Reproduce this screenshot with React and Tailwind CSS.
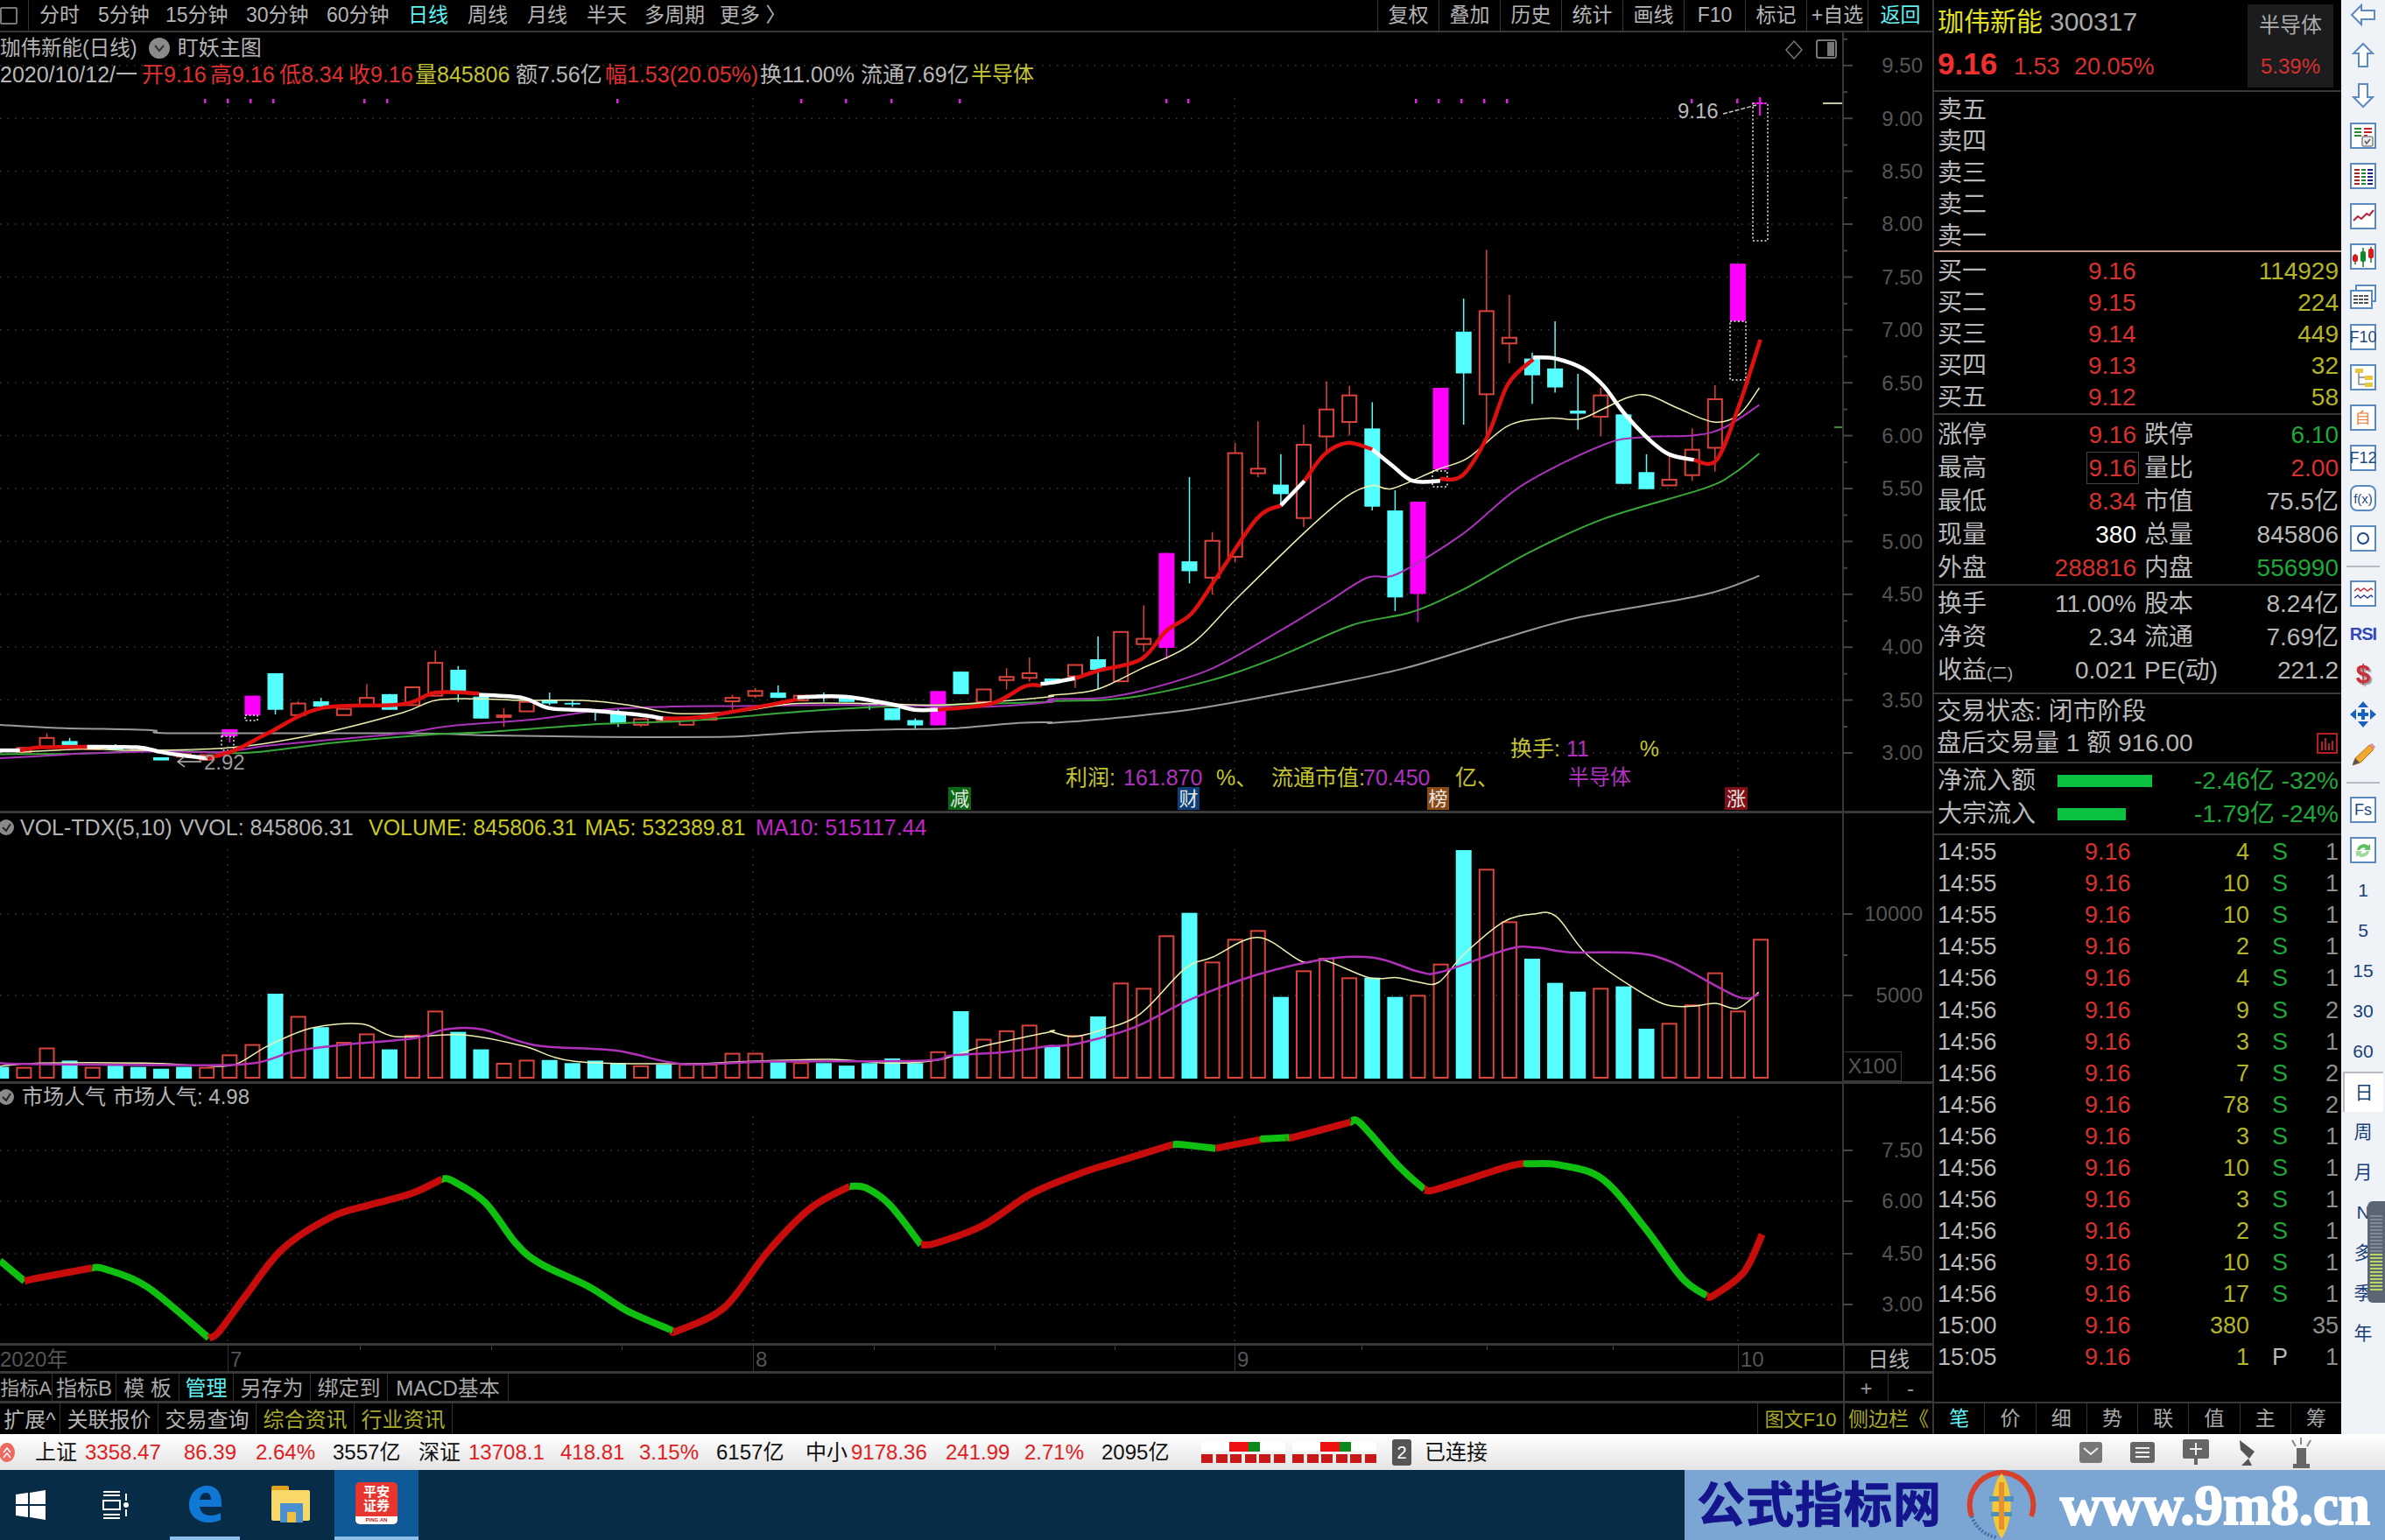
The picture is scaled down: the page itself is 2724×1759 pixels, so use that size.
import React from "react";

// measured from crops of the reference, converted to page pixels
const leftPt = ([x, y]) => [x / 1.307, 700 + y / 2.8];
const rightPt = ([x, y]) => [1200 + x / 1.742, 250 + y / 2.306];
const volRightPt = ([x, y]) => [1200 + x / 1.568, 920 + y / 3];
const popPt = ([x, y]) => [x / 0.713, 1230 + y / 3];
const candleX = (i) => 1.3 + 26.1 * i;

// catmull-rom through the measured points so the averages don't look like straight segments
const smooth = (p) => {
  if (p.length < 3) return `M${p.map((q) => q.join(" ")).join("L")}`;
  let d = `M${p[0][0].toFixed(1)} ${p[0][1].toFixed(1)}`;
  for (let i = 0; i < p.length - 1; i++) {
    const a = p[i - 1] || p[i];
    const b = p[i];
    const c = p[i + 1];
    const e = p[i + 2] || c;
    const c1 = [b[0] + (c[0] - a[0]) / 6, b[1] + (c[1] - a[1]) / 6];
    const c2 = [c[0] - (e[0] - b[0]) / 6, c[1] - (e[1] - b[1]) / 6];
    d += `C${c1[0].toFixed(1)} ${c1[1].toFixed(1)} ${c2[0].toFixed(1)} ${c2[1].toFixed(1)} ${c[0].toFixed(1)} ${c[1].toFixed(1)}`;
  }
  return d;
};

const candlesLeft = [
  ["c", 438, 445, 435, 448], ["r", 432, 445], ["r", 400, 428, 385, 428], ["c", 410, 425, 400, 425], ["r", 428, 436],
  ["c", 428, 438, 420, 438], ["r", 430, 440], ["c", 462, 472], ["r", 452, 460], ["r", 455, 470],
  ["m", 372, 395, 372, 415], ["m", 265, 328], ["c", 193, 310, 193, 325], ["r", 290, 327, 283, 327], ["c", 283, 300, 272, 300],
  ["r", 307, 327], ["r", 272, 295, 228, 295], ["c", 260, 310], ["r", 238, 295], ["r", 160, 265, 120, 265],
  ["c", 182, 250, 170, 285], ["c", 268, 338], ["r", 328, 333, 305, 365], ["r", 285, 315], ["c", 280, 290, 255, 295],
  ["c", 288, 293, 280, 300], ["c", 312, 318, 310, 345], ["c", 320, 355, 305, 365], ["r", 340, 358, 340, 365], ["r", 335, 345],
  ["r", 340, 358], ["r", 335, 342], ["r", 272, 283, 262, 310], ["r", 250, 265, 240, 272], ["c", 255, 272, 232, 272],
  ["r", 265, 280], ["c", 262, 266, 255, 285], ["c", 272, 285], ["c", 290, 295, 290, 310], ["c", 305, 343],
  ["c", 343, 360, 337, 375], ["m", 250, 360], ["c", 188, 260], ["r", 245, 285], ["r", 205, 215, 177, 245],
  ["r", 193, 208, 143, 220], ["c", 210, 225],
];
const candlesRight = [
  ["r", 1175, 1205, 1175, 1235], ["c", 1160, 1188, 1100, 1240], ["r", 1088, 1218], ["r", 1106, 1120, 1018, 1140], ["m", 880, 1130, 880, 1160],
  ["c", 902, 928, 680, 960], ["r", 848, 945, 825, 990], ["r", 617, 890, 590, 905], ["r", 658, 670, 533, 680], ["c", 700, 725, 620, 750],
  ["r", 595, 788, 542, 812], ["r", 502, 573, 428, 620], ["r", 465, 535, 440, 570], ["c", 552, 758, 483, 768], ["c", 768, 997, 715, 1033],
  ["m", 745, 988, 745, 1062], ["m", 445, 660], ["c", 297, 407, 210, 542], ["r", 243, 462, 82, 590], ["r", 313, 328, 200, 380],
  ["c", 368, 412, 352, 487], ["c", 394, 444, 270, 458], ["c", 505, 513, 408, 555], ["r", 465, 521, 445, 573], ["c", 515, 698],
  ["c", 667, 712, 620, 712], ["r", 687, 702, 625, 702], ["r", 608, 675, 552, 690], ["r", 475, 603, 438, 665], ["m", 118, 269],
];
const candles = [
  ...candlesLeft.map(([t, a, b, c = a, d = b]) => [t, 700 + a / 2.8, 700 + b / 2.8, 700 + c / 2.8, 700 + d / 2.8]),
  ...candlesRight.map(([t, a, b, c = a, d = b]) => [t, 250 + a / 2.306, 250 + b / 2.306, 250 + c / 2.306, 250 + d / 2.306]),
];

const thickLine = [
  ["#ffffff", [[0, 440], [30, 440]], []],
  ["#e01010", [[30, 440], [60, 430], [130, 428]], []],
  ["#ffffff", [[130, 428], [205, 430], [240, 445], [270, 455], [310, 465]], []],
  ["#e01010", [[310, 465], [350, 440], [400, 385], [480, 305], [600, 293], [650, 255], [715, 258]], []],
  ["#ffffff", [[715, 262], [780, 272], [820, 305], [880, 312], [950, 325], [990, 338]], []],
  ["#e01010", [[990, 338], [1040, 335], [1110, 310], [1190, 277]], []],
  ["#ffffff", [[1190, 270], [1260, 268], [1330, 292], [1365, 310], [1400, 310]], []],
  ["#e01010", [[1400, 310], [1480, 290], [1530, 235], [1555, 233]], []],
  ["#ffffff", [], [[-20, 1225], [0, 1222], [48, 1210]]],
  ["#e01010", [], [[50, 1210], [95, 1190], [180, 1160], [230, 1085], [280, 1040], [330, 945], [410, 790], [458, 755]]],
  ["#ffffff", [], [[458, 755], [505, 690]]],
  ["#e01010", [], [[505, 690], [545, 620], [590, 590], [640, 607]]],
  ["#ffffff", [], [[640, 607], [680, 650], [720, 690], [775, 690]]],
  ["#e01010", [], [[775, 685], [820, 675], [870, 570], [910, 435], [960, 370]]],
  ["#ffffff", [], [[960, 365], [1005, 368], [1060, 395], [1100, 440], [1140, 510], [1190, 580], [1230, 620], [1280, 635]]],
  ["#e01010", [], [[1280, 635], [1325, 635], [1370, 490], [1412, 318]]],
];

const maLines = [
  ["#9a9a9a", 2, [[0, 358], [85, 368], [225, 375], [260, 385], [600, 385], [735, 392], [900, 397], [1075, 397], [1140, 390], [1215, 380], [1350, 372], [1420, 370], [1520, 352], [1568, 350]],
    [[0, 1328], [100, 1318], [290, 1290], [500, 1240], [700, 1185], [900, 1105], [1050, 1050], [1300, 990], [1410, 940]]],
  ["#38a838", 2, [[0, 452], [120, 450], [250, 440], [365, 448], [500, 415], [640, 390], [735, 380], [900, 355], [1030, 345], [1200, 315], [1320, 300], [1400, 295], [1480, 290], [1568, 285]],
    [[0, 1270], [150, 1262], [320, 1215], [450, 1155], [600, 1070], [720, 1035], [830, 970], [950, 880], [1100, 790], [1300, 710], [1360, 670], [1410, 618]]],
  ["#a832b8", 2, [[0, 465], [85, 455], [120, 450], [240, 443], [330, 445], [400, 425], [500, 405], [600, 385], [680, 360], [800, 340], [900, 310], [1000, 300], [1100, 298], [1200, 295], [1320, 295], [1400, 300], [1480, 300], [1568, 285]],
    [[0, 1265], [100, 1262], [190, 1240], [320, 1185], [450, 1090], [550, 1010], [630, 945], [690, 935], [820, 830], [940, 700], [1100, 595], [1180, 575], [1280, 570], [1340, 550], [1410, 490]]],
  ["#f0f0b0", 1.5, [[30, 445], [130, 435], [205, 440], [350, 430], [480, 385], [600, 320], [650, 280], [715, 275], [780, 280], [870, 280], [940, 295], [1010, 322], [1100, 315], [1190, 290], [1300, 290], [1400, 295], [1480, 285], [1568, 268]],
    [[0, 1255], [90, 1240], [180, 1185], [280, 1120], [370, 1000], [510, 820], [590, 730], [640, 702], [680, 710], [770, 660], [830, 630], [910, 545], [990, 525], [1050, 528], [1100, 500], [1150, 470], [1190, 465], [1250, 500], [1320, 535], [1370, 515], [1410, 445]]],
];

const topMarks = [234, 260, 286, 312, 416, 442, 705, 915, 966, 1018, 1096, 1332, 1357, 1617, 1643, 1669, 1695, 1721, 1932, 1984, 2010];

const volLeft = [1452, 1455, 1393, 1432, 1455, 1448, 1452, 1458, 1452, 1455, 1415, 1382, 1218, 1292, 1325, 1375, 1348, 1396, 1352, 1275, 1340, 1396, 1442, 1432, 1430, 1440, 1432, 1440, 1450, 1445, 1445, 1445, 1410, 1410, 1432, 1440, 1440, 1448, 1440, 1425, 1440, 1405, 1274, 1365, 1338, 1320];
const volRight = [825, 790, 723, 610, 628, 448, 368, 538, 460, 430, 656, 568, 525, 592, 590, 656, 652, 545, 153, 220, 400, 525, 608, 638, 628, 620, 765, 748, 685, 575, 706, 460];
const volTops = [...volLeft.map((y) => 700 + y / 2.8), ...volRight.map((y) => 920 + y / 3)];
const volCyan = new Set([0, 3, 5, 6, 7, 8, 12, 14, 17, 20, 21, 24, 25, 26, 27, 29, 34, 36, 37, 38, 39, 40, 42, 46, 48, 52, 56, 60, 61, 64, 67, 68, 69, 71, 72]);

const volYellow = [...[[0, 1450], [60, 1440], [215, 1440], [300, 1448], [350, 1445], [400, 1385], [465, 1328], [540, 1315], [590, 1355], [690, 1350], [780, 1385], [860, 1435], [1030, 1442], [1110, 1435], [1240, 1428], [1330, 1440], [1400, 1430], [1470, 1385], [1568, 1340]].map(leftPt),
  ...[[0, 775], [40, 792], [90, 770], [160, 715], [240, 560], [290, 520], [372, 452], [450, 535], [490, 530], [570, 590], [620, 590], [660, 606], [695, 606], [740, 510], [810, 400], [865, 372], [905, 380], [960, 510], [1040, 620], [1100, 682], [1150, 688], [1190, 678], [1230, 695], [1268, 640]].map(volRightPt)];
const volPurple = [...[[0, 1440], [50, 1443], [290, 1447], [380, 1440], [440, 1402], [510, 1382], [620, 1360], [665, 1332], [720, 1332], [800, 1383], [920, 1400], [1020, 1443], [1150, 1435], [1380, 1432], [1420, 1415], [1500, 1405], [1568, 1385]].map(leftPt),
  ...[[0, 825], [50, 815], [150, 760], [250, 665], [370, 580], [490, 527], [580, 522], [660, 570], [700, 570], [820, 492], [870, 487], [930, 503], [1040, 505], [1110, 535], [1230, 655], [1268, 647]].map(volRightPt)];

const popSegments = [
  ["g", [[0, 630], [20, 700]]],
  ["r", [[30, 690], [75, 655]]],
  ["g", [[85, 658], [120, 720], [170, 895]]],
  ["r", [[178, 875], [200, 750], [230, 590], [270, 480], [300, 440], [335, 400], [360, 350]]],
  ["g", [[368, 355], [395, 430], [420, 570], [440, 640], [480, 720], [510, 800], [548, 870]]],
  ["r", [[552, 870], [590, 790], [625, 600], [660, 450], [692, 375]]],
  ["g", [[705, 380], [725, 440], [750, 575]]],
  ["r", [[762, 570], [800, 510], [840, 400], [880, 330], [910, 290], [955, 232]]],
  ["g", [[962, 232], [990, 245]]],
  ["r", [[998, 238], [1030, 212]]],
  ["g", [[1030, 212], [1050, 208]]],
  ["r", [[1055, 205], [1100, 155]]],
  ["g", [[1108, 160], [1140, 310], [1160, 385]]],
  ["r", [[1170, 385], [1230, 305], [1245, 298]]],
  ["g", [[1245, 298], [1270, 302], [1305, 350], [1340, 520], [1370, 690], [1390, 750]]],
  ["r", [[1395, 750], [1420, 670], [1435, 540]]],
];

const gridProps = { stroke: "#3c3c3c", strokeWidth: 1.5, strokeDasharray: "1.5 7" };

function MainChart() {
  const hLines = Array.from({ length: 14 }, (_, i) => 860 - i * 60.4);
  return (
    <svg width="2207" height="889" viewBox="0 37 2207 889" className="block">
      {hLines.map((y) => <line key={y} x1="0" x2="2100" y1={y} y2={y} {...gridProps} />)}
      {[260, 860, 1410, 1985].map((x) => <line key={x} x1={x} x2={x} y1="112" y2="926" {...gridProps} />)}
      <line x1="2105" x2="2105" y1="37" y2="926" stroke="#383838" strokeWidth="2" />
      {hLines.map((y) => <line key={y} x1="2105" x2="2116" y1={y} y2={y} stroke="#444" strokeWidth="2" />)}
      {hLines.map((y) => <line key={y} x1="2105" x2="2110" y1={y - 30} y2={y - 30} stroke="#444" strokeWidth="2" />)}
      <line x1="2082" x2="2104" y1="118" y2="118" stroke="#c8c8a0" strokeWidth="2" />
      <line x1="2095" x2="2104" y1="488" y2="488" stroke="#3a8a3a" strokeWidth="2" />
      {topMarks.map((x) => <rect key={x} x={x - 1} y="113" width="2.5" height="5" fill="#e020e0" />)}

      {candles.map(([t, top, bottom, wickTop, wickBottom], i) => {
        const x = candleX(i);
        const color = t === "r" ? "#d9433c" : t === "c" ? "#55ffff" : "#ff00ff";
        return (
          <g key={i}>
            <line x1={x} x2={x} y1={wickTop} y2={wickBottom} stroke={color} strokeWidth="1.5" />
            {t === "r" ? (
              <rect x={x - 8} y={top} width="16" height={bottom - top} fill="#000" stroke={color} strokeWidth="2" />
            ) : (
              <rect x={x - 9} y={top} width="18" height={bottom - top} fill={color} />
            )}
          </g>
        );
      })}

      {/* limit-up gap boxes */}
      <g fill="none" stroke="#e8e8e8" strokeWidth="1.5" strokeDasharray="2 2.5">
        <rect x="2002" y="118" width="17" height="157" />
        <rect x="1976" y="367" width="18" height="67" />
        <rect x="1636" y="538" width="17" height="18" />
        <rect x="280" y="817" width="14" height="6" />
        <rect x="253" y="841" width="14" height="16" />
      </g>
      <line x1="2010" x2="2010" y1="111" y2="132" stroke="#ff00ff" strokeWidth="2" />
      <line x1="2003" x2="2018" y1="118" y2="118" stroke="#ff00ff" strokeWidth="1.5" />
      <line x1="1968" x2="2006" y1="130" y2="120" stroke="#ccc" strokeWidth="1.5" strokeDasharray="5 2" />

      {maLines.map(([color, w, left, right]) => (
        <path key={color} d={smooth([...left.map(leftPt), ...right.map(rightPt)])} fill="none" stroke={color} strokeWidth={w} />
      ))}
      {thickLine.map(([color, left, right], i) => (
        <path key={i} d={smooth([...left.map(leftPt), ...right.map(rightPt)])} fill="none" stroke={color} strokeWidth="4.5" />
      ))}

      {/* small diamond + panel toggle */}
      <polygon points="2049,47 2058,57 2049,67 2040,57" fill="none" stroke="#777" strokeWidth="1.5" />
      <rect x="2075" y="46" width="22" height="20" rx="2" fill="none" stroke="#777" strokeWidth="2" />
      <rect x="2087" y="48" width="8" height="16" fill="#777" />
      <line x1="203" x2="230" y1="870" y2="870" stroke="#bbb" strokeWidth="1.5" />
      <polyline points="211,864 203,870 211,876" fill="none" stroke="#bbb" strokeWidth="1.5" />
    </svg>
  );
}

function VolChart() {
  return (
    <svg width="2207" height="306" viewBox="0 929 2207 306" className="block">
      {[1044, 1137].map((y) => <line key={y} x1="0" x2="2100" y1={y} y2={y} {...gridProps} />)}
      {[260, 860, 1410, 1985].map((x) => <line key={x} x1={x} x2={x} y1="970" y2="1230" {...gridProps} />)}
      <line x1="2105" x2="2105" y1="929" y2="1235" stroke="#383838" strokeWidth="2" />
      {[1044, 1137].map((y) => <line key={y} x1="2105" x2="2116" y1={y} y2={y} stroke="#444" strokeWidth="2" />)}
      <line x1="2105" x2="2110" y1="1091" y2="1091" stroke="#444" strokeWidth="2" />
      {volTops.map((top, i) => {
        const x = candleX(i);
        return volCyan.has(i) ? (
          <rect key={i} x={x - 9} y={top} width="18" height={1232 - top} fill="#55ffff" />
        ) : (
          <rect key={i} x={x - 8} y={top} width="16" height={1231 - top} fill="#000" stroke="#d9433c" strokeWidth="2" />
        );
      })}
      <path d={smooth(volYellow)} fill="none" stroke="#f0f0b0" strokeWidth="1.5" />
      <path d={smooth(volPurple)} fill="none" stroke="#b030b8" strokeWidth="2.5" />
    </svg>
  );
}

function PopChart() {
  return (
    <svg width="2207" height="296" viewBox="0 1238 2207 296" className="block">
      {[1314, 1372, 1432, 1490].map((y) => <line key={y} x1="0" x2="2100" y1={y} y2={y} {...gridProps} />)}
      {[260, 860, 1410, 1985].map((x) => <line key={x} x1={x} x2={x} y1="1275" y2="1534" {...gridProps} />)}
      <line x1="2105" x2="2105" y1="1238" y2="1534" stroke="#383838" strokeWidth="2" />
      {[1314, 1372, 1432, 1490].map((y) => <line key={y} x1="2105" x2="2116" y1={y} y2={y} stroke="#444" strokeWidth="2" />)}
      {popSegments.map(([c, list], i) => {
        // start where the previous colour stopped, there is no gap in the curve
        const prev = i > 0 ? popSegments[i - 1][1] : null;
        const p = (prev ? [prev[prev.length - 1], ...list] : list).map(popPt);
        return <path key={i} d={smooth(p)} fill="none" stroke={c === "r" ? "#c80c0c" : "#10c010"} strokeWidth="8" />;
      })}
    </svg>
  );
}

const CheckDot = () => (
  <svg width="16" height="20" viewBox="0 0 16 20" className="shrink-0">
    <circle cx="7" cy="10" r="9" fill="#8a8a8a" />
    <polyline points="3,10 7,14 12,6" fill="none" stroke="#222" strokeWidth="2" />
  </svg>
);

const periodTabs = [
  ["分时", "w-[67px]", false], ["5分钟", "w-[77px]", false], ["15分钟", "w-[92px]", false], ["30分钟", "w-[92px]", false],
  ["60分钟", "w-[93px]", false], ["日线", "w-[68px]", true], ["周线", "w-[68px]", false], ["月线", "w-[68px]", false],
  ["半天", "w-[66px]", false], ["多周期", "w-[86px]", false], ["更多 〉", "w-[90px]", false],
];
const actionTabs = ["复权", "叠加", "历史", "统计", "画线", "F10", "标记", "+自选"];

function TopBar() {
  return (
    <div className="flex h-[37px] shrink-0 items-stretch border-b-2 border-[#383838] text-[23px] leading-[35px] text-[#b4b4b4]">
      <div className="flex w-[33px] shrink-0 items-center border-r border-[#333]">
        <div className="h-[20px] w-[20px] rounded-[2px] border-2 border-[#777]" />
      </div>
      <div className="ml-[12px] flex">
        {periodTabs.map(([label, w, active]) => (
          <span key={label} className={`${w} whitespace-nowrap ${active ? "text-[#5ff2f2]" : ""}`}>{label}</span>
        ))}
      </div>
      <div className="ml-auto flex">
        {actionTabs.map((label) => (
          <span key={label} className="w-[70px] whitespace-nowrap border-l border-[#383838] text-center">{label}</span>
        ))}
        <span className="w-[74px] border-l border-[#383838] text-center text-[#5ff2f2]">返回</span>
      </div>
    </div>
  );
}

const quoteParts = [
  ["2020/10/12/一", "w-[162px] text-[#b8b8b8]"], ["开9.16", "w-[78px] text-[#e03030]"], ["高9.16", "w-[79px] text-[#e03030]"], ["低8.34", "w-[79px] text-[#e03030]"],
  ["收9.16", "w-[76px] text-[#e03030]"], ["量845806", "w-[115px] text-[#c4c430]"], ["额7.56亿", "w-[102px] text-[#b8b8b8]"], ["幅1.53(20.05%)", "w-[177px] text-[#e03030]"],
  ["换11.00%", "w-[115px] text-[#b8b8b8]"], ["流通7.69亿", "w-[126px] text-[#b8b8b8]"], ["半导体", "text-[#c4c430] text-[24px]"],
];
const priceLabels = ["9.50", "9.00", "8.50", "8.00", "7.50", "7.00", "6.50", "6.00", "5.50", "5.00", "4.50", "4.00", "3.50", "3.00"];

function MainPane() {
  return (
    <div className="relative h-[892px] shrink-0 border-b-[3px] border-[#383838]">
      <MainChart />
      <div className="absolute left-0 top-[3px] leading-[30px]">
        <div className="flex items-center text-[#b4b4b4]">
          <span className="text-[23.5px]">珈伟新能(日线)</span>
          <span className="ml-[13px] flex h-[24px] w-[24px] items-center justify-center rounded-full bg-[#8a8a8a]">
            <svg width="12" height="10" viewBox="0 0 12 10"><path d="M1 2l5 6 5-6" fill="none" stroke="#333" strokeWidth="2" /></svg>
          </span>
          <span className="ml-[9px] text-[24px]">盯妖主图</span>
        </div>
        <div className="flex whitespace-nowrap text-[25px]">
          {quoteParts.map(([text, cls]) => <span key={text} className={cls}>{text}</span>)}
        </div>
      </div>
      <div className="absolute left-[1916px] top-[76px] text-[24px] leading-[28px] text-[#b8b8b8]">9.16</div>
      <div className="absolute left-[233px] top-[820px] text-[24px] leading-[28px] text-[#999]">2.92</div>

      {/* axis labels */}
      <div className="absolute right-[11px] top-[8px] flex flex-col text-[24px] text-[#555]">
        {priceLabels.map((p) => <div key={p} className="flex h-[60.4px] items-center">{p}</div>)}
      </div>

      {/* notes on the chart canvas */}
      <div className="absolute left-[1725px] top-[804px] whitespace-nowrap text-[25px] leading-[28px] text-[#c4c430]">
        换手: <span className="text-[#b030c0]">11</span><span className="ml-[58px]">%</span>
      </div>
      <div className="absolute left-[1217px] top-[837px] flex whitespace-nowrap text-[25px] leading-[28px] text-[#c4c430]">
        <span className="w-[66px]">利润:</span>
        <span className="w-[106px] text-[#b030c0]">161.870</span>
        <span className="w-[63px]">%、</span>
        <span className="w-[105px] overflow-visible">流通市值:</span>
        <span className="w-[105px] text-[#b030c0]">70.450</span>
        <span className="w-[129px]">亿、</span>
        <span className="text-[24px] text-[#b030c0]">半导体</span>
      </div>
      <div className="absolute left-[1083px] top-[862px] flex h-[26px] w-[26px] items-center justify-center bg-[#0a6a12] text-[22px] text-[#e8e8e8]">减</div>
      <div className="absolute left-[1345px] top-[862px] flex h-[26px] w-[25px] items-center justify-center bg-[#0c3f78] text-[22px] text-[#e8e8e8]">财</div>
      <div className="absolute left-[1630px] top-[862px] flex h-[26px] w-[25px] items-center justify-center bg-[#8a4a14] text-[22px] text-[#e8e8e8]">榜</div>
      <div className="absolute left-[1970px] top-[862px] flex h-[26px] w-[26px] items-center justify-center bg-[#7e0f14] text-[22px] text-[#e8e8e8]">涨</div>
    </div>
  );
}

function VolPane() {
  return (
    <div className="relative h-[309px] shrink-0 border-b-[3px] border-[#383838]">
      <VolChart />
      <div className="absolute left-0 top-[2px] flex items-center whitespace-nowrap text-[25px] leading-[28px]">
        <CheckDot />
        <span className="ml-[7px] w-[182px] text-[#b4b4b4]">VOL-TDX(5,10)</span>
        <span className="w-[216px] text-[#b4b4b4]">VVOL: 845806.31</span>
        <span className="w-[247px] text-[#c8c820]">VOLUME: 845806.31</span>
        <span className="w-[195px] text-[#c8c820]">MA5: 532389.81</span>
        <span className="text-[#c026c8]">MA10: 515117.44</span>
      </div>
      <div className="absolute right-[11px] top-[101px] text-[24px] leading-[28px] text-[#555]">10000</div>
      <div className="absolute right-[11px] top-[194px] text-[24px] leading-[28px] text-[#555]">5000</div>
      <div className="absolute bottom-0 left-[2105px] flex h-[34px] w-[67px] items-center justify-center border border-[#3a3a3a] bg-black text-[24px] text-[#555]">X100</div>
    </div>
  );
}

function PopPane() {
  return (
    <div className="relative h-[299px] shrink-0 border-b-[3px] border-[#383838]">
      <PopChart />
      <div className="absolute left-0 top-[1px] flex items-center whitespace-nowrap text-[24px] leading-[28px] text-[#b4b4b4]">
        <CheckDot />
        <span className="ml-[9px] w-[104px]">市场人气</span>
        <span>市场人气: 4.98</span>
      </div>
      <div className="absolute right-[11px] top-[62px] text-[24px] leading-[28px] text-[#555]">7.50</div>
      <div className="absolute right-[11px] top-[120px] text-[24px] leading-[28px] text-[#555]">6.00</div>
      <div className="absolute right-[11px] top-[180px] text-[24px] leading-[28px] text-[#555]">4.50</div>
      <div className="absolute right-[11px] top-[238px] text-[24px] leading-[28px] text-[#555]">3.00</div>
    </div>
  );
}

// month cell: label, then three small week ticks along the top edge
const MonthCell = ({ label, width }) => (
  <div className={`${width} grid grid-cols-4 border-l border-[#333]`}>
    <span className="pl-[2px]">{label}</span>
    <span className="h-[5px] border-l border-[#444]" />
    <span className="h-[5px] border-l border-[#444]" />
    <span className="h-[5px] border-l border-[#444]" />
  </div>
);

function DateAxis() {
  return (
    <div className="flex h-[32px] shrink-0 border-b-[3px] border-[#383838] text-[24px] leading-[31px] text-[#555]">
      <div className="w-[260px] overflow-hidden">2020年</div>
      <MonthCell label="7" width="w-[600px]" />
      <MonthCell label="8" width="w-[550px]" />
      <MonthCell label="9" width="w-[575px]" />
      <div className="w-[120px] border-l border-[#333] pl-[2px]">10</div>
      <div className="flex-1 border-l-2 border-[#383838] text-center text-[#b4b4b4]">日线</div>
    </div>
  );
}

const indicatorTabs = [
  ["指标A", "w-[60px] text-[22px]", ""], ["指标B", "w-[73px]", ""], ["模 板", "w-[72px]", ""], ["管理", "w-[62px]", "text-[#5ff2f2]"],
  ["另存为", "w-[88px]", ""], ["绑定到", "w-[88px]", ""], ["MACD基本", "w-[138px]", ""],
];
const infoTabs = [
  ["扩展^", "w-[69px]", "text-[#b4b4b4]"], ["关联报价", "w-[112px]", "text-[#b4b4b4]"], ["交易查询", "w-[112px]", "text-[#b4b4b4]"],
  ["综合资讯", "w-[112px]", "text-[#a8a828]"], ["行业资讯", "w-[112px]", "text-[#a8a828]"],
];

function BottomTabs() {
  return (
    <>
      <div className="flex h-[34px] shrink-0 border-b-[3px] border-[#383838] text-[24px] leading-[33px] text-[#a8a8a8]">
        {indicatorTabs.map(([label, w, cls]) => (
          <span key={label} className={`${w} ${cls} whitespace-nowrap border-r border-[#333] text-center`}>{label}</span>
        ))}
        <div className="ml-auto flex w-[102px] border-l-2 border-[#383838] text-center text-[#999]">
          <span className="w-[50px] border-r border-[#333]">+</span>
          <span className="flex-1">-</span>
        </div>
      </div>
      <div className="flex h-[35px] shrink-0 text-[24px] leading-[37px]">
        {infoTabs.map(([label, w, cls]) => (
          <span key={label} className={`${w} ${cls} whitespace-nowrap border-r border-[#333] text-center`}>{label}</span>
        ))}
        <span className="ml-auto w-[98px] whitespace-nowrap border-l border-[#333] text-center text-[22px] text-[#a8a828]">图文F10</span>
        <span className="w-[102px] whitespace-nowrap border-l-2 border-[#383838] text-center text-[23px] text-[#a8a828]">侧边栏《</span>
      </div>
    </>
  );
}

const Label = ({ children, className = "" }) => <span className={`whitespace-nowrap text-[#b8b8b8] ${className}`}>{children}</span>;
const rowCls = "flex items-center justify-between";

const asks = ["卖五", "卖四", "卖三", "卖二", "卖一"];
const bids = [["买一", "9.16", "114929"], ["买二", "9.15", "224"], ["买三", "9.14", "449"], ["买四", "9.13", "32"], ["买五", "9.12", "58"]];
const RED = "text-[#d8302f]";
const GRAY = "text-[#b8b8b8]";
const GREEN = "text-[#1ea83a]";
const stats = [
  ["涨停", "9.16", RED, "跌停", "6.10", GREEN],
  ["最高", "9.16", RED, "量比", "2.00", RED],
  ["最低", "8.34", RED, "市值", "75.5亿", GRAY],
  ["现量", "380", "text-white", "总量", "845806", GRAY],
  ["外盘", "288816", RED, "内盘", "556990", GREEN],
];
const stats2 = [
  ["换手", "11.00%", "股本", "8.24亿"],
  ["净资", "2.34", "流通", "7.69亿"],
  [<>收益<span className="text-[18px]">(二)</span></>, "0.021", "PE(动)", "221.2"],
];
const ticks = [
  ["14:55", "4", "S", "1"], ["14:55", "10", "S", "1"], ["14:55", "10", "S", "1"], ["14:55", "2", "S", "1"],
  ["14:56", "4", "S", "1"], ["14:56", "9", "S", "2"], ["14:56", "3", "S", "1"], ["14:56", "7", "S", "2"],
  ["14:56", "78", "S", "2"], ["14:56", "3", "S", "1"], ["14:56", "10", "S", "1"], ["14:56", "3", "S", "1"],
  ["14:56", "2", "S", "1"], ["14:56", "10", "S", "1"], ["14:56", "17", "S", "1"], ["15:00", "380", "", "35"], ["15:05", "1", "P", "1"],
];
const sideTabs = ["笔", "价", "细", "势", "联", "值", "主", "筹"];

function InfoPanel() {
  return (
    <div className="flex w-[467px] shrink-0 flex-col overflow-hidden border-l-2 border-[#383838] text-[28px]">
      <div className="flex h-[105px] shrink-0 justify-between border-b-2 border-[#383838] pl-[4px] pr-[9px]">
        <div className="pt-[7px]">
          <div className="flex items-center gap-[8px] whitespace-nowrap text-[30px] leading-[36px]">
            <span className="text-[#e0e020]">珈伟新能</span>
            <span className="text-[#a8a8a8]">300317</span>
          </div>
          <div className="mt-[11px] flex items-baseline whitespace-nowrap leading-[38px]">
            <span className="w-[87px] text-[35px] font-bold text-[#ee3030]">9.16</span>
            <span className="w-[69px] text-[27px] text-[#d8302f]">1.53</span>
            <span className="text-[27px] text-[#d8302f]">20.05%</span>
          </div>
        </div>
        <div className="mt-[5px] flex h-[95px] w-[98px] flex-col items-center justify-around bg-[#1c1c1e]">
          <span className="text-[24px] leading-[28px] text-[#aaa]">半导体</span>
          <span className="text-[24px] leading-[28px] text-[#d8302f]">5.39%</span>
        </div>
      </div>

      <div className="h-[183px] shrink-0 border-b-2 border-[#c09484] pl-[4px] pt-[3px]">
        {asks.map((a) => <div key={a} className="h-[36px] leading-[36px]"><Label>{a}</Label></div>)}
      </div>

      <div className="h-[186px] shrink-0 border-b-2 border-[#383838] pl-[4px] pr-[3px] pt-[3.5px]">
        {bids.map(([a, p, v]) => (
          <div key={a} className="flex h-[36.1px] items-center">
            <Label className="w-[172px]">{a}</Label>
            <span className="w-[58px] text-[#d8302f]">{p}</span>
            <span className="flex-1 text-right text-[#b4b428]">{v}</span>
          </div>
        ))}
      </div>

      <div className="h-[195px] shrink-0 border-b-2 border-[#383838] pt-[3.5px]">
        {stats.map(([a, v1, c1, b, v2, c2], i) => (
          <div key={a} className="flex h-[38.1px] items-center pl-[4px] pr-[3px]">
            <div className={`${rowCls} w-[227px]`}>
              <Label>{a}</Label>
              {i === 1 ? (
                <span className={`${c1} -mr-[3px] border border-[#444] px-[2px] leading-[35px]`}>{v1}</span>
              ) : (
                <span className={c1}>{v1}</span>
              )}
            </div>
            <div className={`${rowCls} flex-1 pl-[9px]`}>
              <Label>{b}</Label>
              <span className={`${c2} whitespace-nowrap`}>{v2}</span>
            </div>
          </div>
        ))}
      </div>

      <div className="h-[124px] shrink-0 border-b-2 border-[#383838] pt-[1.5px]">
        {stats2.map(([a, v1, b, v2]) => (
          <div key={b} className="flex h-[38.2px] items-center pl-[4px] pr-[3px]">
            <div className={`${rowCls} w-[227px]`}>
              <Label>{a}</Label>
              <span className={GRAY}>{v1}</span>
            </div>
            <div className={`${rowCls} flex-1 pl-[9px]`}>
              <Label>{b}</Label>
              <span className={`${GRAY} whitespace-nowrap`}>{v2}</span>
            </div>
          </div>
        ))}
      </div>

      <div className="h-[79px] shrink-0 border-b-2 border-[#383838] pl-[3px] pr-[4px] pt-[2px] leading-[36px]">
        <div className="h-[36px]"><Label>交易状态: 闭市阶段</Label></div>
        <div className="flex h-[36px] items-center justify-between">
          <Label>盘后交易量 1 额 916.00</Label>
          <svg width="24" height="24" viewBox="0 0 24 24">
            <rect x="1" y="1" width="22" height="22" fill="none" stroke="#b82020" strokeWidth="2" />
            <path d="M6 20V10M10 20V6M14 20V12M18 20V9" stroke="#b82020" strokeWidth="2" />
          </svg>
        </div>
      </div>

      <div className="h-[82px] shrink-0 border-b-2 border-[#383838] pl-[4px] pr-[3px] pt-[1px]">
        <div className="flex h-[38px] items-center">
          <Label className="w-[137px]">净流入额</Label>
          <div className="h-[14px] w-[108px] bg-[#0cc040]" />
          <span className={`${GREEN} ml-auto whitespace-nowrap`}>-2.46亿 -32%</span>
        </div>
        <div className="flex h-[38px] items-center">
          <Label className="w-[137px]">大宗流入</Label>
          <div className="h-[14px] w-[78px] bg-[#0cc040]" />
          <span className={`${GREEN} ml-auto whitespace-nowrap`}>-1.79亿 -24%</span>
        </div>
      </div>

      <div className="min-h-0 flex-1 pl-[4px] pr-[3px] pt-[1.5px] text-[27px]">
        {ticks.map(([t, q, f, n], i) => (
          <div key={i} className="flex h-[36.06px] items-center">
            <Label className="w-[168px]">{t}</Label>
            <span className="w-[56px] text-[#d8302f]">9.16</span>
            <span className="w-[132px] text-right text-[#b4b428]">{q}</span>
            <span className={`ml-[26px] w-[20px] ${f === "S" ? "text-[#1ea83a]" : "text-[#b8b8b8]"}`}>{f}</span>
            <span className="flex-1 text-right text-[#8e8e8e]">{n}</span>
          </div>
        ))}
      </div>

      <div className="flex h-[37px] shrink-0 border-t-[2px] border-[#383838] text-[23px] leading-[35px] text-[#a8a8a8]">
        {sideTabs.map((s, i) => (
          <span key={s} className={`flex-1 text-center ${i < 7 ? "border-r border-[#333]" : ""} ${i === 0 ? "text-[#5ff2f2]" : ""}`}>{s}</span>
        ))}
      </div>
    </div>
  );
}

const BLUE = "#5a8abf";
const Tile = ({ children, r = 0 }) => (
  <svg width="30" height="30" viewBox="0 0 30 30">
    <rect x="1" y="1" width="28" height="28" rx={r} fill="#fff" stroke={BLUE} strokeWidth="2" />
    {children}
  </svg>
);
const Arrow = ({ d }) => (
  <svg width="30" height="30" viewBox="0 0 30 30">
    <path d={d} fill="#fff" stroke={BLUE} strokeWidth="2" />
  </svg>
);
const TileText = ({ children, size = 16, color = "#1d4a86" }) => (
  <text x="15" y="21" textAnchor="middle" fontSize={size} fill={color} fontFamily="Liberation Sans">{children}</text>
);

const toolItems = [
  <Arrow d="M2 15 13 4v6h15v10H13v6z" />,
  <Arrow d="M15 2 26 13h-6v15H10V13H4z" />,
  <Arrow d="M15 28 26 17h-6V2H10v15H4z" />,
  <Tile>
    <path d="M5 7h8M5 11h8M5 15h8" stroke="#2a8a2a" strokeWidth="2" />
    <path d="M16 7h9M16 11h9M16 15h4" stroke="#c02020" strokeWidth="2" />
    <rect x="14" y="16" width="12" height="11" rx="2" fill="#eee" stroke="#888" strokeWidth="1.5" />
    <path d="M17 21l2 3 4-5" fill="none" stroke="#555" strokeWidth="1.5" />
  </Tile>,
  <Tile>
    <path d="M5 8h6M5 12h6M5 16h6M5 20h6M5 24h6" stroke="#b02020" strokeWidth="2" />
    <path d="M13 8h5M13 12h5M13 16h5M13 20h5M13 24h5" stroke="#208030" strokeWidth="2" />
    <path d="M20 8h6M20 12h6M20 16h6M20 20h6M20 24h6" stroke="#202080" strokeWidth="2" />
  </Tile>,
  <Tile><polyline points="4,20 9,15 13,18 19,12 22,14 27,8" fill="none" stroke="#b0203a" strokeWidth="2" /></Tile>,
  <Tile>
    <path d="M6 12v12M15 5v22M24 4v18" stroke="#1a7a1a" strokeWidth="1.5" />
    <rect x="3" y="13" width="6" height="8" rx="2" fill="#e01818" />
    <rect x="12" y="9" width="6" height="12" rx="2" fill="#108a28" />
    <rect x="21" y="6" width="6" height="11" rx="2" fill="#e01818" />
  </Tile>,
  <svg width="32" height="30" viewBox="0 0 32 30">
    <rect x="8" y="2" width="22" height="18" fill="#fff" stroke={BLUE} strokeWidth="2" />
    <rect x="2" y="8" width="24" height="20" fill="#fff" stroke={BLUE} strokeWidth="2" />
    <path d="M5 14h18M5 18h18M5 22h18" stroke="#555" strokeWidth="2" strokeDasharray="5 1" />
  </svg>,
  <Tile><TileText size={18}>F10</TileText></Tile>,
  <Tile>
    <rect x="6" y="5" width="9" height="5" fill="#e8c840" />
    <rect x="17" y="13" width="9" height="5" fill="#e8c840" />
    <rect x="17" y="21" width="9" height="5" fill="#e8c840" />
    <path d="M10 10v13h7M10 15h7" fill="none" stroke="#888" strokeWidth="1.5" />
  </Tile>,
  <Tile><TileText size={18} color="#ee7a30">自</TileText></Tile>,
  <Tile><TileText size={18}>F12</TileText></Tile>,
  <Tile r={7}><TileText size={15}>f(x)</TileText></Tile>,
  <Tile><circle cx="15" cy="15" r="6" fill="none" stroke="#1d4a86" strokeWidth="2" /></Tile>,
  null,
  <Tile>
    <polyline points="5,12 9,9 12,12 16,9 20,12 24,9 26,11" fill="none" stroke="#c03040" strokeWidth="1.5" />
    <polyline points="5,20 9,17 12,20 16,17 20,20 24,17 26,19" fill="none" stroke="#3040a0" strokeWidth="1.5" />
  </Tile>,
  <span className="text-[20px] font-bold tracking-[-1px] text-[#3048b8]">RSI</span>,
  <span className="text-[30px] font-bold leading-none text-[#c8303c] [text-shadow:2px_2px_1px_#999]">$</span>,
  <svg width="30" height="30" viewBox="0 0 30 30" fill="#1560c0">
    <path d="M15 0l6 7H9zM15 30l-6-7h12zM0 15l7-6v12zM30 15l-7 6V9z" />
    <rect x="9" y="13" width="12" height="4" />
    <rect x="13" y="9" width="4" height="12" />
  </svg>,
  <svg width="30" height="30" viewBox="0 0 30 30">
    <path d="M3 27l3-8L22 4l5 5-15 15z" fill="#f0a830" stroke="#b87818" strokeWidth="1" />
    <path d="M22 4l3-2 4 4-2 3z" fill="#e09090" />
    <path d="M3 27l3-8 5 5z" fill="#555" />
  </svg>,
  null,
  <Tile><TileText size={18}>Fs</TileText></Tile>,
  <Tile>
    <path d="M8 15a8 8 0 0 1 13-5l2-2v7h-7l2-2a5 5 0 0 0-7 2z" fill="#60c060" />
    <path d="M22 16a8 8 0 0 1-13 5l-2 2v-7h7l-2 2a5 5 0 0 0 7-2z" fill="#a0d8a0" />
  </Tile>,
];
const periods = ["1", "5", "15", "30", "60", "日", "周", "月", "N", "多", "季", "年"];

function Toolbar() {
  return (
    <div className="relative flex w-[50px] shrink-0 flex-col items-center overflow-hidden bg-[#eff3f8]">
      <div className="-mt-[6px] flex flex-col items-center">
        {toolItems.map((item, i) =>
          item ? (
            <div key={i} className="flex h-[46px] w-[50px] items-center justify-center">{item}</div>
          ) : (
            <div key={i} className="flex h-[17px] w-[38px] items-center"><div className="h-[2px] w-full bg-[#b8bcc2]" /></div>
          )
        )}
        {periods.map((p) => (
          <div
            key={p}
            className={`flex h-[46px] w-[46px] items-center justify-center text-[21px] text-[#173f78] ${p === "日" ? "border-l-2 border-t-2 border-[#b8bcc2] bg-white" : ""}`}
          >
            {p}
          </div>
        ))}
      </div>
      {/* floating scroll handle */}
      <div className="absolute right-0 top-[1372px] flex h-[116px] w-[20px] flex-col justify-end rounded-l-[6px] bg-[#5b6675] px-[3px] pb-[12px]">
        <div className="h-[44px] bg-[repeating-linear-gradient(to_bottom,#7f8a98_0_2px,#5b6675_2px_4px)]" />
        <div className="h-[44px] bg-[repeating-linear-gradient(to_bottom,#b8d860_0_2px,#5b6675_2px_4px)]" />
      </div>
    </div>
  );
}

const statusCells = [
  ["上证", "w-[57px]", "text-[#111]"], ["3358.47", "w-[113px]", "text-[#e02020]"], ["86.39", "w-[82px]", "text-[#e02020]"],
  ["2.64%", "w-[88px]", "text-[#e02020]"], ["3557亿", "w-[98px]", "text-[#111]"], ["深证", "w-[57px]", "text-[#111]"],
  ["13708.1", "w-[105px]", "text-[#e02020]"], ["418.81", "w-[90px]", "text-[#e02020]"], ["3.15%", "w-[88px]", "text-[#e02020]"],
  ["6157亿", "w-[102px]", "text-[#111]"], ["中小", "w-[52px]", "text-[#111]"], ["9178.36", "w-[108px]", "text-[#e02020]"],
  ["241.99", "w-[90px]", "text-[#e02020]"], ["2.71%", "w-[88px]", "text-[#e02020]"], ["2095亿", "w-[114px]", "text-[#111]"],
];

const MiniGauge = () => (
  <div className="flex w-[96px] flex-col gap-[3px]">
    <div className="flex h-[11px] justify-center bg-white pl-[2px]">
      <div className="w-[22px] bg-[#ee1010]" />
      <div className="w-[13px] bg-[#0a8a1a]" />
    </div>
    <div className="flex h-[10px] justify-between">
      {[0, 1, 2, 3, 4, 5].map((n) => <div key={n} className="w-[13px] bg-[#c81818]" />)}
    </div>
  </div>
);

function StatusBar() {
  return (
    <div className="flex h-[41px] shrink-0 items-center bg-linear-to-b from-white to-[#e4e4e4] text-[24px] leading-none">
      <svg width="18" height="24" viewBox="0 0 18 24" className="shrink-0">
        <ellipse cx="8" cy="12" rx="9" ry="11" fill="#ee6a60" />
        <path d="M4 12l4-5 4 5M4 18l4-5 4 5" fill="none" stroke="#fff" strokeWidth="1.5" />
      </svg>
      <div className="ml-[22px] flex whitespace-nowrap">
        {statusCells.map(([text, w, color], i) => <span key={i} className={`${w} ${color}`}>{text}</span>)}
      </div>
      <div className="flex gap-[8px]"><MiniGauge /><MiniGauge /></div>
      <span className="ml-[18px] flex h-[30px] w-[22px] items-center justify-center rounded-[3px] bg-[#555] text-[20px] text-white">2</span>
      <span className="ml-[15px] text-[#111]">已连接</span>
      <div className="ml-auto mr-[79px] flex items-center gap-[32px]">
        <svg width="26" height="30" viewBox="0 0 26 30"><rect y="3" width="26" height="24" rx="3" fill="#777" /><path d="M5 10l8 7 8-7" fill="none" stroke="#eee" strokeWidth="2" /></svg>
        <svg width="28" height="30" viewBox="0 0 28 30"><rect y="3" width="28" height="24" rx="3" fill="#666" /><path d="M6 10h16M6 15h16M6 20h16" stroke="#eee" strokeWidth="2" /></svg>
        <svg width="30" height="34" viewBox="0 0 30 34"><rect y="2" width="30" height="22" rx="2" fill="#666" /><path d="M15 6v14M8 13h14" stroke="#eee" strokeWidth="2" /><path d="M13 24h4v7h-4z" fill="#666" /></svg>
        <svg width="25" height="34" viewBox="0 0 25 34"><path d="M3 3 20 16 14 24 4 14zM13 24 17 32H5z" fill="#555" /></svg>
        <svg width="33" height="38" viewBox="0 0 33 38"><rect x="11" y="14" width="11" height="18" fill="#666" /><rect x="7" y="32" width="19" height="5" fill="#666" /><path d="M16 2v8M6 5l4 7M27 5l-4 7" stroke="#888" strokeWidth="2" /></svg>
      </div>
    </div>
  );
}

function Taskbar() {
  return (
    <div className="flex h-[80px] shrink-0 items-stretch bg-[#072c48]">
      <div className="flex w-[70px] items-center justify-center">
        <svg width="34" height="34" viewBox="0 0 34 34" fill="#fff">
          <path d="M0 5l14-2v13H0zM16 3 34 0v16H16zM0 18h14v13L0 29zM16 18h18v16l-18-3z" />
        </svg>
      </div>
      <div className="flex w-[124px] items-center justify-center">
        <svg width="32" height="32" viewBox="0 0 32 32" fill="none" stroke="#fff" strokeWidth="2">
          <path d="M2 1h19M2 31h19M2 5h19M2 27h19" />
          <rect x="2" y="11" width="19" height="10" />
          <circle cx="28" cy="16" r="2" fill="#fff" />
          <path d="M28 3v8M28 21v8" />
        </svg>
      </div>
      <div className="flex w-[80px] items-center justify-center border-b-[4px] border-[#8cc0ea]">
        <svg width="42" height="44" viewBox="0 0 42 44">
          <path d="M3 24C3 10 13 2 24 2c10 0 16 8 16 20v4H15c1 7 6 10 13 10 4 0 8-1 11-3v8c-4 2-8 3-13 3C12 44 3 36 3 24zM15 18h13c0-5-2-8-6-8-4 0-6 3-7 8z" fill="#0f78d4" />
        </svg>
      </div>
      <div className="flex w-[108px] items-center justify-center pl-[8px]">
        <svg width="44" height="44" viewBox="0 0 44 44">
          <rect y="0" width="20" height="8" rx="2" fill="#e0a020" />
          <rect y="5" width="44" height="35" rx="2" fill="#f8d868" />
          <rect x="10" y="20" width="26" height="22" fill="#4a90d0" />
          <rect x="18" y="30" width="10" height="12" fill="#f0c040" />
        </svg>
      </div>
      <div className="flex w-[96px] items-center justify-center border-b-[4px] border-[#8cc0ea] bg-[#0f5a96]">
        <div className="flex h-[48px] w-[48px] flex-col items-center overflow-hidden rounded-[5px] bg-[#e8362e] pt-[3px] text-[15px] font-bold leading-[16px] text-white">
          <span>平安</span>
          <span>证券</span>
          <span className="mt-auto w-full bg-white text-center text-[6px] leading-[9px] text-[#c02020]">PING AN</span>
        </div>
      </div>
      <div className="ml-auto flex w-[800px] items-center bg-[#7ba6d4] pl-[14px]">
        <span className="w-[308px] shrink-0 whitespace-nowrap text-[55px] font-bold leading-none tracking-[1px] text-[#14148c] [-webkit-text-stroke:1px_#14148c]">公式指标网</span>
        <svg width="80" height="80" viewBox="0 0 80 80" className="shrink-0">
          <path d="M40 3a37 37 0 0 0-34 50" fill="none" stroke="#d8402c" strokeWidth="6" />
          <path d="M40 3a37 37 0 0 1 34 50" fill="none" stroke="#d8402c" strokeWidth="6" />
          <path d="M6 53a37 37 0 0 0 28 24" fill="none" stroke="#4468a8" strokeWidth="4" strokeDasharray="2 2" />
          <path d="M40 4c14 16 14 56 0 74C26 60 26 20 40 4z" fill="#f0c838" />
          <rect x="26" y="30" width="28" height="6" fill="#4a90c0" />
          <rect x="28" y="48" width="24" height="5" fill="#4a90c0" />
          <rect x="37" y="14" width="6" height="54" fill="#e89030" />
        </svg>
        <span className="ml-[27px] whitespace-nowrap text-[65px] font-bold leading-none text-white [-webkit-text-stroke:2px_white] [font-family:'Liberation_Serif',serif]">www.9m8.cn</span>
      </div>
    </div>
  );
}

export default function App() {
  return (
    <div className="flex h-[1759px] w-[2724px] flex-col overflow-hidden bg-black [font-family:'Liberation_Sans','Noto_Sans_CJK_SC',sans-serif]">
      <div className="flex h-[1638px] shrink-0">
        <div className="flex w-[2207px] shrink-0 flex-col">
          <TopBar />
          <MainPane />
          <VolPane />
          <PopPane />
          <DateAxis />
          <BottomTabs />
        </div>
        <InfoPanel />
        <Toolbar />
      </div>
      <StatusBar />
      <Taskbar />
    </div>
  );
}
